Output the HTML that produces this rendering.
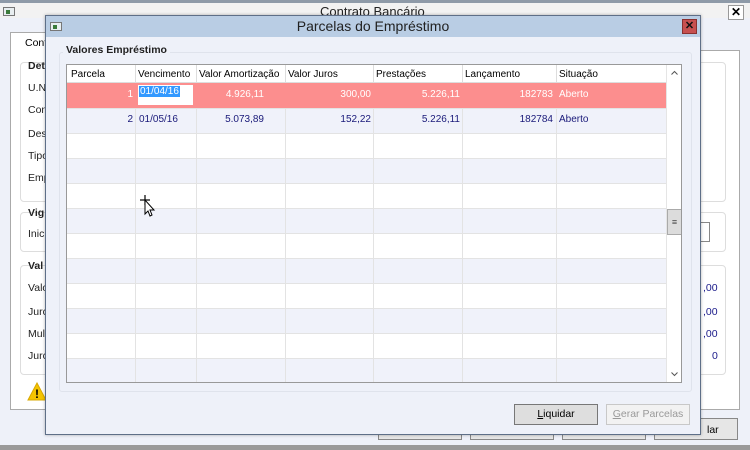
<!DOCTYPE html>
<html><head><meta charset="utf-8"><style>
*{box-sizing:border-box;margin:0;padding:0}
body{width:750px;height:450px;overflow:hidden;background:#eef1f9;font-family:"Liberation Sans",sans-serif;font-size:11px;position:relative;color:#000}
.abs{position:absolute}
.lbl{position:absolute;font-size:10.5px;color:#222}
.cell{position:absolute;font-size:10px;white-space:nowrap}
</style></head><body>
<div class="abs" style="left:0;top:0;width:750px;height:3px;background:#8e9aa8"></div>
<div class="abs" style="left:0;top:3px;width:750px;height:15px;background:#f2f2f2"></div>
<div class="abs" style="left:3px;top:7px;width:12px;height:9px;border:1px solid #777;background:#e8eef0"><div style="width:4px;height:4px;background:#3a7a3a;margin:2px"></div></div>
<div class="abs" style="left:320px;top:4px;font-size:13px;color:#222">Contrato Bancário</div>
<div class="abs" style="left:728px;top:5px;width:16px;height:15px;border:1px solid #999;background:#fff;text-align:center;font-weight:bold;font-size:12px;line-height:13px">✕</div>
<div class="abs" style="left:10px;top:50px;width:730px;height:360px;border:1px solid #aaa;background:#fff"></div>
<div class="abs" style="left:10px;top:32px;width:40px;height:19px;border:1px solid #aaa;border-bottom:none;background:#fff;font-size:10.5px;padding:4px 0 0 14px">Cont</div>
<div class="abs" style="left:20px;top:62px;width:40px;height:140px;border:1px solid #ddd;border-radius:4px"></div>
<div class="abs" style="left:20px;top:212px;width:40px;height:40px;border:1px solid #ddd;border-radius:4px"></div>
<div class="abs" style="left:20px;top:265px;width:40px;height:110px;border:1px solid #ddd;border-radius:4px"></div>
<div class="lbl" style="left:28px;top:60px;font-weight:bold">Det</div>
<div class="lbl" style="left:28px;top:82px">U.N</div>
<div class="lbl" style="left:28px;top:104px">Con</div>
<div class="lbl" style="left:28px;top:128px">Des</div>
<div class="lbl" style="left:28px;top:150px">Tipo</div>
<div class="lbl" style="left:28px;top:172px">Emp</div>
<div class="lbl" style="left:28px;top:207px;font-weight:bold">Vig</div>
<div class="lbl" style="left:28px;top:228px">Inici</div>
<div class="lbl" style="left:28px;top:260px;font-weight:bold">Val</div>
<div class="lbl" style="left:28px;top:282px">Valo</div>
<div class="lbl" style="left:28px;top:306px">Jurc</div>
<div class="lbl" style="left:28px;top:328px">Mult</div>
<div class="lbl" style="left:28px;top:350px">Jurc</div>
<svg class="abs" style="left:27px;top:382px" width="20" height="20"><polygon points="10,1 19,18 1,18" fill="#f5c400" stroke="#d9a800"/><text x="10" y="16" font-size="12" text-anchor="middle" font-weight="bold" font-family="Liberation Sans">!</text></svg>
<div class="abs" style="left:690px;top:62px;width:36px;height:140px;border:1px solid #ddd;border-radius:4px"></div>
<div class="abs" style="left:690px;top:212px;width:36px;height:40px;border:1px solid #ddd;border-radius:4px"></div>
<div class="abs" style="left:700px;top:222px;width:10px;height:20px;border:1px solid #888"></div>
<div class="abs" style="left:690px;top:265px;width:36px;height:110px;border:1px solid #ddd;border-radius:4px"></div>
<div class="lbl" style="left:703px;top:282px;color:#1a1a8a">,00</div>
<div class="lbl" style="left:703px;top:306px;color:#1a1a8a">,00</div>
<div class="lbl" style="left:703px;top:328px;color:#1a1a8a">,00</div>
<div class="lbl" style="left:712px;top:350px;color:#1a1a8a">0</div>
<div class="abs" style="left:378px;top:418px;width:84px;height:22px;border:1px solid #888;background:#e6e6e6"></div>
<div class="abs" style="left:470px;top:418px;width:84px;height:22px;border:1px solid #888;background:#e6e6e6"></div>
<div class="abs" style="left:562px;top:418px;width:84px;height:22px;border:1px solid #888;background:#e6e6e6"></div>
<div class="abs" style="left:654px;top:418px;width:84px;height:22px;border:1px solid #888;background:#e6e6e6;font-size:10.5px;padding:5px 0 0 52px">lar</div>
<div class="abs" style="left:0;top:445px;width:750px;height:5px;background:#9a9a9a"></div>

<div class="abs" style="left:45px;top:15px;width:656px;height:420px;border:1px solid #5e6f88;background:#eef1f9;box-shadow:0 0 3px rgba(0,0,0,.3)"></div>
<div class="abs" style="left:46px;top:16px;width:654px;height:21px;background:#b9cde4"></div>
<div class="abs" style="left:50px;top:22px;width:12px;height:9px;border:1px solid #777;background:#e8eef0"><div style="width:4px;height:4px;background:#3a7a3a;margin:2px"></div></div>
<div class="abs" style="left:0;width:746px;top:18px;text-align:center;font-size:14px;color:#222">Parcelas do Empréstimo</div>
<div class="abs" style="left:682px;top:19px;width:15px;height:15px;background:#c75050;border:1px solid #8a3030;text-align:center;font-size:11px;font-weight:bold;line-height:13px;color:#111">✕</div>
<div class="abs" style="left:59px;top:52px;width:633px;height:340px;border:1px solid #dfe3ec;border-radius:3px"></div>
<div class="abs" style="left:63px;top:44px;padding:0 3px;background:#eef1f9;font-weight:bold;font-size:10.5px;color:#222">Valores Empréstimo</div>

<div class="abs" style="left:66px;top:64px;width:616px;height:319px;border:1px solid #999;background:#fff;overflow:hidden">
<svg class="abs" style="left:0;top:0" width="599" height="318">
<g fill="#f0f2fa">
<rect x="0" y="43" width="599" height="25"/><rect x="0" y="93" width="599" height="25"/><rect x="0" y="143" width="599" height="25"/><rect x="0" y="193" width="599" height="25"/><rect x="0" y="243" width="599" height="25"/><rect x="0" y="293" width="599" height="25"/>
</g>
<g stroke="#e3e3e3">
<line x1="0" y1="43.5" x2="599" y2="43.5"/><line x1="0" y1="68.5" x2="599" y2="68.5"/><line x1="0" y1="93.5" x2="599" y2="93.5"/><line x1="0" y1="118.5" x2="599" y2="118.5"/><line x1="0" y1="143.5" x2="599" y2="143.5"/><line x1="0" y1="168.5" x2="599" y2="168.5"/><line x1="0" y1="193.5" x2="599" y2="193.5"/><line x1="0" y1="218.5" x2="599" y2="218.5"/><line x1="0" y1="243.5" x2="599" y2="243.5"/><line x1="0" y1="268.5" x2="599" y2="268.5"/><line x1="0" y1="293.5" x2="599" y2="293.5"/>
<line x1="68.5" y1="0" x2="68.5" y2="318"/><line x1="129.5" y1="0" x2="129.5" y2="318"/><line x1="218.5" y1="0" x2="218.5" y2="318"/><line x1="306.5" y1="0" x2="306.5" y2="318"/><line x1="395.5" y1="0" x2="395.5" y2="318"/><line x1="489.5" y1="0" x2="489.5" y2="318"/>
</g>
<rect x="0" y="18" width="599" height="25" fill="#fc8e8e"/>
<rect x="0" y="0" width="599" height="18" fill="#fff"/>
<g stroke="#ddd"><line x1="0" y1="17.5" x2="599" y2="17.5"/><line x1="68.5" y1="0" x2="68.5" y2="18"/><line x1="129.5" y1="0" x2="129.5" y2="18"/><line x1="218.5" y1="0" x2="218.5" y2="18"/><line x1="306.5" y1="0" x2="306.5" y2="18"/><line x1="395.5" y1="0" x2="395.5" y2="18"/><line x1="489.5" y1="0" x2="489.5" y2="18"/></g>
</svg>
<div class="cell" style="left:4px;top:4px">Parcela</div>
<div class="cell" style="left:71px;top:4px">Vencimento</div>
<div class="cell" style="left:132px;top:4px">Valor Amortização</div>
<div class="cell" style="left:221px;top:4px">Valor Juros</div>
<div class="cell" style="left:309px;top:4px">Prestações</div>
<div class="cell" style="left:398px;top:4px">Lançamento</div>
<div class="cell" style="left:492px;top:4px">Situação</div>
<div class="abs" style="left:71px;top:20px;width:55px;height:20px;background:#fff"></div>
<div class="cell" style="left:72px;top:21px;background:#3399ff;color:#fff;padding:0 1px">01/04/16</div>
<div class="cell" style="right:548px;top:24px;color:#fff">1</div>
<div class="cell" style="right:417px;top:24px;color:#fff">4.926,11</div>
<div class="cell" style="right:310px;top:24px;color:#fff">300,00</div>
<div class="cell" style="right:221px;top:24px;color:#fff">5.226,11</div>
<div class="cell" style="right:128px;top:24px;color:#fff">182783</div>
<div class="cell" style="left:492px;top:24px;color:#fff">Aberto</div>
<div class="cell" style="right:548px;top:49px;color:#1a1a7a">2</div>
<div class="cell" style="left:72px;top:49px;color:#1a1a7a">01/05/16</div>
<div class="cell" style="right:417px;top:49px;color:#1a1a7a">5.073,89</div>
<div class="cell" style="right:310px;top:49px;color:#1a1a7a">152,22</div>
<div class="cell" style="right:221px;top:49px;color:#1a1a7a">5.226,11</div>
<div class="cell" style="right:128px;top:49px;color:#1a1a7a">182784</div>
<div class="cell" style="left:492px;top:49px;color:#1a1a7a">Aberto</div>
<div class="abs" style="left:599px;top:0;width:16px;height:318px;background:#fff;border-left:1px solid #e5e5e5"></div>
<svg class="abs" style="left:600px;top:0" width="15" height="318"><path d="M4.5 9.5 L7.5 6.5 L10.5 9.5" fill="none" stroke="#555"/><path d="M4.5 307.5 L7.5 310.5 L10.5 307.5" fill="none" stroke="#555"/></svg>
<div class="abs" style="left:600px;top:144px;width:15px;height:26px;background:#dcdcdc;border:1px solid #aaa;text-align:center;font-size:9px;line-height:24px;color:#444">≡</div>
</div>
<svg class="abs" style="left:137px;top:192px" width="20" height="26"><g stroke="#000" stroke-width="1.2"><line x1="3" y1="8" x2="13" y2="8"/><line x1="8" y1="3" x2="8" y2="13"/></g><path d="M8 8 L8 22 L11 19 L13 24 L15 23 L13 18 L17 18 Z" fill="#fff" stroke="#000" stroke-width="1"/></svg>
<div class="abs" style="left:514px;top:404px;width:84px;height:21px;border:1px solid #777;background:#dedede;text-align:center;font-size:10.5px;line-height:19px"><u>L</u>iquidar</div>
<div class="abs" style="left:606px;top:404px;width:84px;height:21px;border:1px solid #c8c8c8;background:#f2f2f2;text-align:center;font-size:10.5px;line-height:19px;color:#999"><u>G</u>erar Parcelas</div>
</body></html>
